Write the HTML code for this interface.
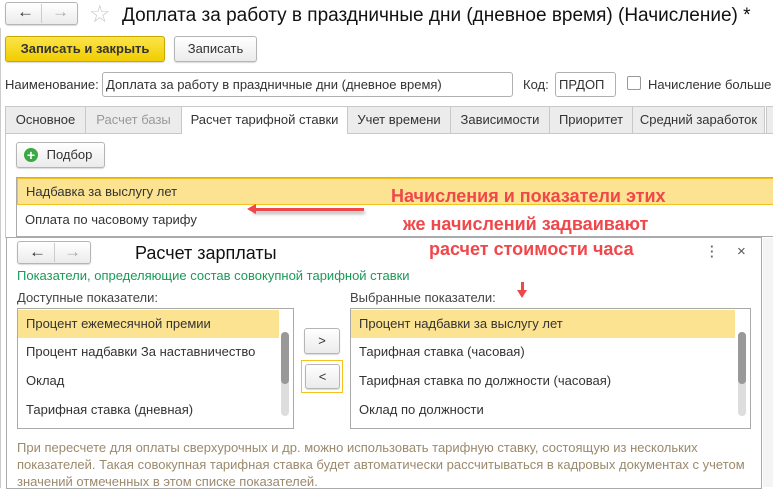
<!DOCTYPE html>
<html><head><meta charset="utf-8"><style>
*{box-sizing:border-box;margin:0;padding:0}
body{width:773px;height:487px;overflow:hidden;background:#fff;font-family:"Liberation Sans",Arial,sans-serif;font-size:13px;color:#333;position:relative}
.a{position:absolute}
.btn{position:absolute;border:1px solid #b5b5b5;border-radius:3px;background:linear-gradient(#fff,#ebebeb);box-shadow:0 1px 1px rgba(0,0,0,.15);text-align:center}
.inp{position:absolute;border:1px solid #b0b0b0;border-radius:3px;background:#fff;padding-left:3px}
.tab{position:absolute;top:106px;height:27px;border:1px solid #c8c8c8;border-bottom:none;background:#ececec;text-align:center;line-height:25px;color:#333}
.red{color:#f0474b;font-weight:bold;font-size:18px;position:absolute;white-space:nowrap}
.row{position:absolute;height:28px;line-height:28px;padding-left:8px;color:#333}
.sb{position:absolute;width:10px;background:#eee}
</style></head><body>
<!-- top nav -->
<div class="btn" style="left:5px;top:2px;width:73px;height:23px"></div>
<div class="a" style="left:41px;top:4px;width:1px;height:19px;background:#ccc"></div>
<div class="a" style="left:17px;top:2px;font-size:17px;color:#333;font-weight:bold">←</div>
<div class="a" style="left:52px;top:2px;font-size:17px;color:#aaa">→</div>
<div class="a" style="left:89px;top:0px;font-size:24px;color:#c8c8c8">☆</div>
<div class="a" style="left:122px;top:5px;font-size:19px;color:#111">Доплата за работу в праздничные дни (дневное время) (Начисление) *</div>
<div class="a" style="left:0;top:28px;width:1px;height:460px;background:#ccc"></div>
<!-- buttons -->
<div class="btn" style="left:5px;top:36px;width:160px;height:26px;background:linear-gradient(#fbe44a,#f2cd00);border-color:#c9a800;font-weight:bold;line-height:24px;color:#333">Записать и закрыть</div>
<div class="btn" style="left:174px;top:36px;width:83px;height:26px;line-height:24px">Записать</div>
<!-- name row -->
<div class="a" style="left:5px;top:77px">Наименование:</div>
<div class="inp" style="left:102px;top:72px;width:411px;height:25px;line-height:23px">Доплата за работу в праздничные дни (дневное время)</div>
<div class="a" style="left:523px;top:77px">Код:</div>
<div class="inp" style="left:555px;top:72px;width:61px;height:25px;line-height:23px">ПРДОП</div>
<div class="a" style="left:627px;top:76px;width:14px;height:14px;border:1px solid #999;border-radius:2px"></div>
<div class="a" style="left:648px;top:77px">Начисление больше</div>
<!-- tabs -->
<div class="tab" style="left:5px;width:81px">Основное</div>
<div class="tab" style="left:85px;width:97px;color:#999">Расчет базы</div>
<div class="tab" style="left:181px;width:167px;background:#fff;height:28px">Расчет тарифной ставки</div>
<div class="tab" style="left:347px;width:104px">Учет времени</div>
<div class="tab" style="left:450px;width:100px">Зависимости</div>
<div class="tab" style="left:549px;width:84px">Приоритет</div>
<div class="tab" style="left:632px;width:133px">Средний заработок</div>
<div class="tab" style="left:766px;width:10px"></div>
<div class="a" style="left:5px;top:133px;width:176px;height:1px;background:#c8c8c8"></div>
<div class="a" style="left:347px;top:133px;width:426px;height:1px;background:#c8c8c8"></div>
<div class="a" style="left:5px;top:133px;width:1px;height:105px;background:#c8c8c8"></div>
<div class="btn" style="left:16px;top:142px;width:89px;height:26px;line-height:24px;padding-left:18px">Подбор</div>
<div class="a" style="left:24px;top:148px;width:14px;height:14px;border-radius:50%;background:#3aa845;color:#fff;font-weight:bold;font-size:14px;line-height:14px;text-align:center">+</div>
<!-- table -->
<div class="a" style="left:16px;top:177px;width:757px;height:60px;border:1px solid #aaa;border-right:none"></div>
<div class="row" style="left:17px;top:178px;width:756px;height:27px;background:#fce391;border:1px solid #f3c21c;border-right:none;line-height:25px">Надбавка за выслугу лет</div>
<div class="row" style="left:17px;top:206px;width:756px">Оплата по часовому тарифу</div>
<div class="a" style="left:252px;top:208px;width:112px;height:3px;background:#f0474b;box-shadow:1px 3px 3px rgba(0,0,0,.3)"></div>
<div class="a" style="left:247px;top:204px;width:0;height:0;border-top:5px solid transparent;border-bottom:5px solid transparent;border-right:9px solid #f0474b"></div>
<div class="red" style="left:391px;top:186px">Начисления и показатели этих</div>
<div class="red" style="left:403px;top:214px">же начислений задваивают</div>
<!-- scroll outer -->
<div class="a" style="left:763px;top:238px;width:10px;height:249px;background:#f4f4f4"></div>
<!-- dialog -->
<div class="a" style="left:6px;top:237px;width:756px;height:252px;border:1px solid #aaa;background:#fff"></div>
<div class="red" style="left:429px;top:239px">расчет стоимости часа</div>
<div class="a" style="left:521px;top:282px;width:3px;height:10px;background:#f0474b"></div>
<div class="a" style="left:517px;top:290px;width:0;height:0;border-left:5px solid transparent;border-right:5px solid transparent;border-top:8px solid #f0474b"></div>
<div class="btn" style="left:17px;top:241px;width:74px;height:23px"></div>
<div class="a" style="left:54px;top:243px;width:1px;height:19px;background:#ccc"></div>
<div class="a" style="left:29px;top:242px;font-size:17px;color:#333;font-weight:bold">←</div>
<div class="a" style="left:64px;top:242px;font-size:17px;color:#aaa">→</div>
<div class="a" style="left:135px;top:243px;font-size:18px;color:#111">Расчет зарплаты</div>
<div class="a" style="left:710px;top:244px;font-size:13px;color:#666;line-height:5px;font-weight:bold">·<br>·<br>·</div>
<div class="a" style="left:737px;top:243px;font-size:15px;color:#555">×</div>
<div class="a" style="left:17px;top:268px;color:#1a9a58">Показатели, определяющие состав совокупной тарифной ставки</div>
<div class="a" style="left:17px;top:290px;color:#444">Доступные показатели:</div>
<div class="a" style="left:350px;top:290px;color:#444">Выбранные показатели:</div>
<!-- left list -->
<div class="a" style="left:17px;top:308px;width:277px;height:121px;border:1px solid #aaa"></div>
<div class="row" style="left:18px;top:310px;width:261px;background:#fce391">Процент ежемесячной премии</div>
<div class="row" style="left:18px;top:338px">Процент надбавки За наставничество</div>
<div class="row" style="left:18px;top:367px">Оклад</div>
<div class="row" style="left:18px;top:396px">Тарифная ставка (дневная)</div>
<div class="sb" style="left:281px;top:332px;width:8px;height:84px;border-radius:4px;background:#ddd"></div>
<div class="sb" style="left:281px;top:332px;width:8px;height:52px;border-radius:4px;background:#999"></div>
<!-- buttons -->
<div class="btn" style="left:304px;top:328px;width:36px;height:26px;line-height:24px">&gt;</div>
<div class="a" style="left:301px;top:360px;width:42px;height:33px;border:1px solid #f3c21c"></div>
<div class="btn" style="left:305px;top:364px;width:35px;height:25px;line-height:23px">&lt;</div>
<!-- right list -->
<div class="a" style="left:350px;top:308px;width:401px;height:121px;border:1px solid #aaa"></div>
<div class="row" style="left:351px;top:310px;width:384px;background:#fce391">Процент надбавки за выслугу лет</div>
<div class="row" style="left:351px;top:338px">Тарифная ставка (часовая)</div>
<div class="row" style="left:351px;top:367px">Тарифная ставка по должности (часовая)</div>
<div class="row" style="left:351px;top:396px">Оклад по должности</div>
<div class="sb" style="left:738px;top:332px;width:8px;height:84px;border-radius:4px;background:#ddd"></div>
<div class="sb" style="left:738px;top:332px;width:8px;height:52px;border-radius:4px;background:#999"></div>
<div class="a" style="left:17px;top:439px;width:740px;color:#9b8a6c;line-height:17px">При пересчете для оплаты сверхурочных и др. можно использовать тарифную ставку, состоящую из нескольких показателей. Такая совокупная тарифная ставка будет автоматически рассчитываться в кадровых документах с учетом значений отмеченных в этом списке показателей.</div>
</body></html>
